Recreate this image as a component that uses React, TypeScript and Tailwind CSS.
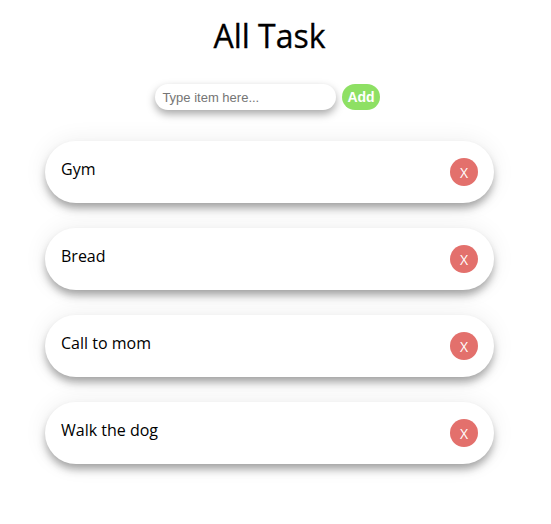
const tasks = ["Gym", "Bread", "Call to mom", "Walk the dog"];

export default function App() {
  return (
    <div className="min-h-screen w-[539px] bg-white font-['Open_Sans',sans-serif] text-black">
      <h1 className="pt-[14px] text-center text-[32px] leading-[44px] [-webkit-text-stroke:0.3px_black]">All Task</h1>

      <form className="mt-[26px] flex items-center justify-center gap-[6px] pr-[4px] font-['Liberation_Sans',Arial,sans-serif]">
        <input
          type="text"
          placeholder="Type item here..."
          className="h-[26px] w-[181px] rounded-full bg-white px-[7px] text-[13px] text-gray-700 placeholder:text-[#757575] shadow-[0_4px_8px_rgba(0,0,0,0.35)] outline-none"
        />
        <button
          type="button"
          className="h-[26px] rounded-full bg-[#8ee064] px-[5px] text-[14px] font-bold text-white"
        >
          Add
        </button>
      </form>

      <ul className="mt-[31px] flex flex-col gap-[25px] px-[45px]">
        {tasks.map((t) => (
          <li
            key={t}
            className="flex h-[62px] items-center justify-between rounded-[31px] bg-white pl-[16px] pr-[16px] shadow-[0_6px_8px_-1px_rgba(0,0,0,0.35),0_0_24px_rgba(0,0,0,0.07)]"
          >
            <span className="-mt-[6px] text-[16px]">{t}</span>
            <button
              type="button"
              className="flex h-[28px] w-[28px] items-center justify-center rounded-full bg-[#e3706c] text-[14px] text-white"
            >
              X
            </button>
          </li>
        ))}
      </ul>
    </div>
  );
}
